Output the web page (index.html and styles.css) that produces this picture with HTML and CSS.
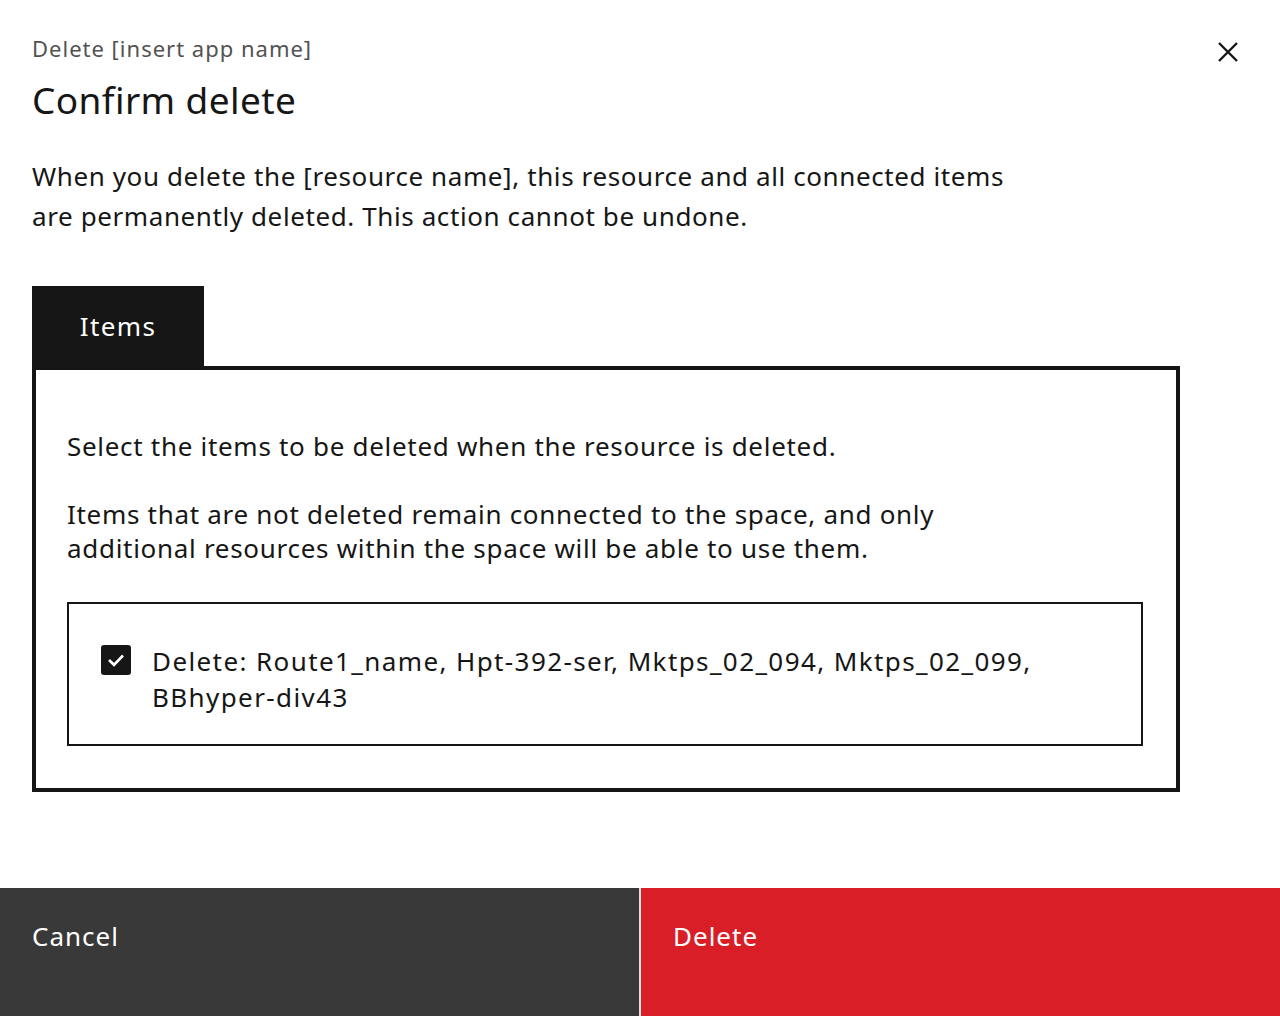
FILE: index.html
```html
<!DOCTYPE html>
<html lang="en">
<head>
<meta charset="utf-8">
<title>Confirm delete</title>
<link rel="stylesheet" href="styles.css">
</head>
<body>
<div class="modal">
  <header class="modal-header">
    <div class="titles">
      <p class="label">Delete [insert app name]</p>
      <h2 class="heading">Confirm delete</h2>
    </div>
    <button class="close" aria-label="Close">
      <svg width="20" height="20" viewBox="0 0 20 20" fill="none" stroke="#161616" stroke-width="2.4"><path d="M1 1 L19 19 M19 1 L1 19"/></svg>
    </button>
  </header>
  <div class="modal-content">
    <p class="intro">When you delete the [resource name], this resource and all connected items are permanently deleted. This action cannot be undone.</p>
    <div class="tabs">
      <div class="tab">Items</div>
    </div>
    <div class="panel">
      <p class="panel-text first">Select the items to be deleted when the resource is deleted.</p>
      <p class="panel-text second">Items that are not deleted remain connected to the space, and only additional resources within the space will be able to use them.</p>
      <div class="item-box">
        <span class="checkbox"><svg width="20" height="16" viewBox="0 0 20 16" fill="none" stroke="#fff" stroke-width="2.6"><path d="M3 8 L8 12.8 L17 3.5"/></svg></span>
        <span class="item-label">Delete: Route1_name, <span class="nowrap">Hpt-392-ser,</span> Mktps_02_094, Mktps_02_099, <span class="nowrap">BBhyper-div43</span></span>
      </div>
    </div>
  </div>
  <footer class="modal-footer">
    <button class="btn btn-secondary">Cancel</button>
    <button class="btn btn-danger">Delete</button>
  </footer>
</div>
</body>
</html>
```
FILE: styles.css
```css
* { box-sizing: border-box; }
html, body { margin: 0; padding: 0; background: #fff; }
body {
  font-family: "Noto Sans", "Open Sans", sans-serif;
  color: #161616;
  width: 1280px;
  height: 1016px;
  overflow: hidden;
  letter-spacing: 0.6px;
}
.modal {
  height: 1016px;
  display: flex;
  flex-direction: column;
}
.modal-header {
  display: flex;
  justify-content: space-between;
  padding: 34px 42px 0 32px;
}
.label {
  margin: 0;
  font-size: 22px;
  line-height: 28px;
  color: #525252;
  letter-spacing: 1px;
}
.heading {
  margin: 16px 0 0;
  font-size: 37px;
  line-height: 44px;
  font-weight: 400;
  letter-spacing: 0.4px;
}
.close {
  border: 0;
  background: none;
  padding: 0;
  margin-top: 8px;
  width: 20px;
  height: 20px;
  display: flex;
}
.modal-content {
  flex: 1;
  padding: 0 32px;
}
.intro {
  margin: 34px 0 0;
  width: 1010px;
  font-size: 26px;
  line-height: 40px;
  letter-spacing: 0.6px;
}
.tabs {
  display: flex;
  margin-top: 50px;
}
.tab {
  width: 172px;
  height: 80px;
  background: #161616;
  color: #fff;
  font-size: 26px;
  letter-spacing: 1.4px;
  display: flex;
  align-items: center;
  justify-content: center;
}
.panel {
  width: 1148px;
  border: 4px solid #161616;
  padding: 59px 33px 42px 31px;
}
.panel-text {
  margin: 0;
  font-size: 26px;
  line-height: 34px;
  letter-spacing: 0.7px;
}
.panel-text.second { margin-top: 34px; width: 900px; }
.item-box {
  margin-top: 37px;
  border: 2px solid #161616;
  display: flex;
  align-items: flex-start;
  gap: 21px;
  padding: 39px 32px 29px 32px;
}
.checkbox {
  flex: none;
  width: 30px;
  height: 30px;
  margin-top: 2px;
  background: #161616;
  border-radius: 3px;
  display: flex;
  align-items: center;
  justify-content: center;
}
.item-label {
  font-size: 26px;
  line-height: 36px;
  letter-spacing: 1.4px;
}
.nowrap { white-space: nowrap; }
.modal-footer {
  display: flex;
  gap: 2px;
  height: 128px;
  background: #e0e0e0;
}
.btn {
  flex: 1;
  border: 0;
  margin: 0;
  font-family: inherit;
  font-size: 26px;
  line-height: 36px;
  letter-spacing: 1px;
  color: #fff;
  text-align: left;
  padding: 30px 32px;
  display: flex;
  align-items: flex-start;
}
.btn-secondary { background: #393939; }
.btn-danger { background: #da1e28; }
```
